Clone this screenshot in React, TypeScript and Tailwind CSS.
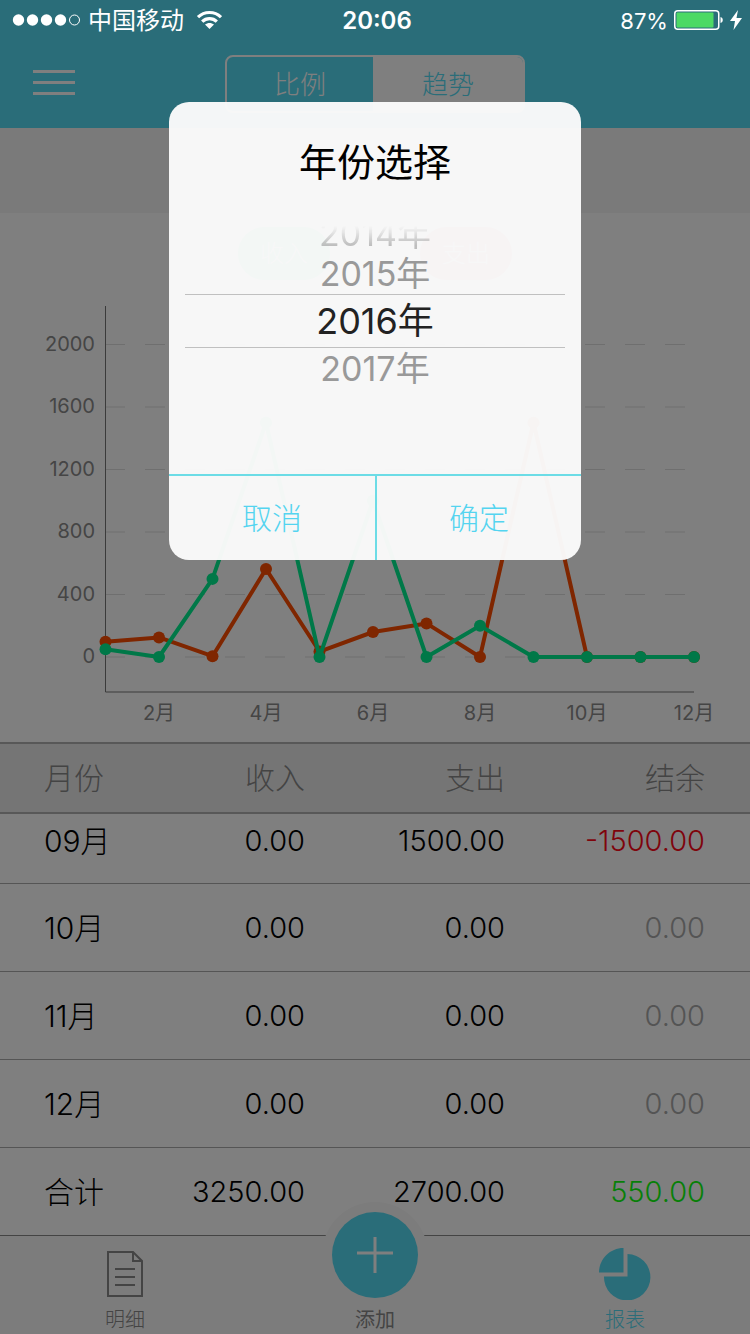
import React, { useState } from 'react';

interface MonthRow {
  month: string;
  income: string;
  expense: string;
  balance: string;
}

const YEARS = [2014, 2015, 2016, 2017];

const INCOME = [50, 0, 500, 1500, 0, 1000, 0, 200, 0, 0, 0, 0];
const EXPENSE = [97, 125, 5, 563, 35, 160, 215, 0, 1500, 0, 0, 0];

const ROWS: MonthRow[] = [
  { month: '09月', income: '0.00', expense: '1500.00', balance: '-1500.00' },
  { month: '10月', income: '0.00', expense: '0.00', balance: '0.00' },
  { month: '11月', income: '0.00', expense: '0.00', balance: '0.00' },
  { month: '12月', income: '0.00', expense: '0.00', balance: '0.00' },
  { month: '合计', income: '3250.00', expense: '2700.00', balance: '550.00' },
];

const balanceColor = (value: string) => {
  const n = parseFloat(value);
  if (n < 0) return 'text-[#ff0818]';
  if (n > 0) return 'text-[#10ff10]';
  return 'text-[#a8a8a8]';
};

const StatusBar: React.FC = () => (
  <div className="relative z-20 grid grid-cols-3 items-center h-10 pl-3 pr-2 text-white text-2xl leading-8">
    <div className="flex items-center gap-2">
      <svg width="68" height="14" viewBox="0 0 68 14" fill="#fff">
        <circle cx="6.500" cy="7" r="5.700" />
        <circle cx="20.500" cy="7" r="5.700" />
        <circle cx="34.500" cy="7" r="5.700" />
        <circle cx="48.500" cy="7" r="5.700" />
        <circle cx="62.500" cy="7" r="5" fill="none" stroke="#fff" />
      </svg>
      <span className="pt-[2px] pr-1">中国移动</span>
      <svg width="26" height="20" viewBox="0 0 26 20" fill="none" stroke="#fff" strokeWidth="3.200">
        <path d="M2 7.200C8.200 .9 18.800 .9 25 7.200" />
        <path d="M6.200 11.600C10.200 7.600 16.800 7.600 20.800 11.600" />
        <path d="M9 14.600C11.500 12.300 15.500 12.300 18 14.600L13.500 19Z" fill="#fff" stroke="none" />
      </svg>
    </div>
    <span className="pt-[2px] text-center font-semibold">20:06</span>
    <div className="flex items-center justify-end gap-[6px]">
      <span className="pt-[2px] text-[22px]">87%</span>
      <svg width="50" height="20" viewBox="0 0 50 20" fill="none">
        <rect x=".75" y=".75" width="44" height="18.500" rx="3" stroke="#fff" strokeWidth="1.500" />
        <rect x="2.500" y="2.500" width="37" height="15" rx="1" fill="#4cd964" />
        <path d="M46.500 7c3 .5 3 5.500 0 6Z" fill="#fff" />
      </svg>
      <svg width="12" height="20" viewBox="0 0 12 20" fill="#fff">
        <path d="M8 0 0 11h5L3.500 20 12 8H6.500Z" />
      </svg>
    </div>
  </div>
);

const px = (i: number) => 105.5 + i * 53.5;
const py = (v: number) => 357 - v * 0.15625;

const Series: React.FC<{ values: number[]; color: string }> = ({ values, color }) => (
  <g fill={color}>
    <polyline
      points={values.map((v, i) => `${px(i)},${py(v)}`).join(' ')}
      fill="none"
      stroke={color}
      strokeWidth="4"
      strokeLinejoin="round"
    />
    {values.map((v, i) => (
      <circle key={i} cx={px(i)} cy={py(v)} r="6" />
    ))}
  </g>
);

const TrendChart: React.FC = () => (
  <svg viewBox="0 0 750 442" className="block w-full" role="img" aria-label="收支趋势">
    {[0, 400, 800, 1200, 1600, 2000].map((v) => (
      <g key={v}>
        <line x1="105" x2="694" y1={py(v)} y2={py(v)} stroke="#dedede" strokeDasharray="20 20" />
        <text x="95" y={py(v) + 6} textAnchor="end" fontSize="20" fill="#8a8a8a">
          {v}
        </text>
      </g>
    ))}
    <path d="M105.500 6V392H694" fill="none" stroke="#777777" strokeWidth="1" />
    {[2, 4, 6, 8, 10, 12].map((m) => (
      <text key={m} x={px(m - 1)} y="420" textAnchor="middle" fontSize="20" fill="#8a8a8a">
        {m}月
      </text>
    ))}
    <Series values={EXPENSE} color="#ff4c00" />
    <Series values={INCOME} color="#00f090" />
  </svg>
);

const MonthTable: React.FC = () => (
  <table className="w-full table-fixed border-separate border-spacing-0 text-right text-[30px] leading-10 font-light">
    <colgroup>
      <col className="w-[105px]" />
      <col />
      <col />
      <col className="w-[245px]" />
    </colgroup>
    <thead>
      <tr className="bg-[#ebebeb] text-[#888888] [&>th]:h-[72px] [&>th]:border-y-2 [&>th]:border-[#b0b0b0] [&>th]:font-light">
        <th className="pl-11 text-left whitespace-nowrap">月份</th>
        <th>收入</th>
        <th>支出</th>
        <th className="pr-[45px]">结余</th>
      </tr>
    </thead>
    <tbody className="[&_td]:border-b [&_td]:border-[#aaaaaa] [&_td]:h-[88px] [&>tr:first-child>td]:h-[70px] [&>tr:first-child>td]:pb-4 [&>tr:last-child>td]:border-b-0">
      {ROWS.map((row) => (
        <tr key={row.month} className="text-[29px]">
          <td className="pl-11 text-left whitespace-nowrap text-[30px]">{row.month}</td>
          <td>{row.income}</td>
          <td>{row.expense}</td>
          <td className={`pr-[45px] ${balanceColor(row.balance)}`}>{row.balance}</td>
        </tr>
      ))}
    </tbody>
  </table>
);

const TabBar: React.FC = () => (
  <nav className="grid grid-cols-3 grid-rows-1 h-[99px] -mt-px bg-[#f8f8f8] border-t border-[#888888] text-xl leading-5 font-light text-[#888888]">
    <a href="#detail" className="flex flex-col items-center justify-end gap-[10px] pb-1">
      <svg width="38" height="52" viewBox="0 0 38 52" fill="none" stroke="#888888" strokeWidth="2">
        <path d="M2 4H27L36 13V48H2Z" />
        <path d="M27 4V13H36" />
        <path d="M9 21H29M9 29H29M9 37H29" />
      </svg>
      <span>明细</span>
    </a>
    <button type="button" className="flex flex-col items-center justify-end gap-3 pb-1">
      <span className="flex shrink-0 items-center justify-center size-[86px] rounded-full bg-[#54daf2] ring-[10px] ring-[#f8f8f8]">
        <svg width="36" height="36" viewBox="0 0 36 36" stroke="#fff" strokeWidth="3">
          <path d="M0 16H36M18 0V36" />
        </svg>
      </span>
      <span className="font-normal">添加</span>
    </button>
    <a href="#report" className="flex flex-col items-center justify-end gap-[10px] pb-1 text-[#54daf2]">
      <svg width="52" height="52" viewBox="0 0 52 52" fill="#54daf2">
        <path d="M24.500 0V24.500H0C0 11 11 0 24.500 0Z" />
        <path d="M28.500 6A23.200 23.200 0 1 1 5 28.500H28.500Z" />
      </svg>
      <span>报表</span>
    </a>
  </nav>
);

const YearDialog: React.FC = () => {
  const [year, setYear] = useState(2016);

  // rows get shorter and fade away from the selected one, like a wheel
  const rowStyle = (y: number) => {
    if (y === year) return 'h-[54px] border-y border-[#c0c0c0] items-center text-[36px] leading-10 text-[#222222]';
    if (y < year - 1) return 'h-6 items-start text-[34px] leading-4 text-[#999999] opacity-60 mask-t-from-20% mask-t-to-100%';
    if (y < year) return 'h-11 items-end text-[34px] leading-10 text-[#999999]';
    return 'h-[42px] items-center text-[34px] leading-10 text-[#999999]';
  };

  return (
    <div role="dialog" aria-label="年份选择" className="w-[412px] overflow-hidden rounded-[20px] bg-[#fbfbfb]/97">
      <h2 className="flex items-center justify-center h-[124px] pb-1 text-[38px] leading-[48px] text-black">年份选择</h2>
      <div role="listbox" aria-label="年份" className="flex flex-col h-[248px] px-4 overflow-hidden">
        {YEARS.map((y) => (
          <button
            key={y}
            type="button"
            role="option"
            aria-selected={y === year}
            onClick={() => setYear(y)}
            className={`flex shrink-0 justify-center overflow-hidden ${rowStyle(y)}`}
          >
            {y}年
          </button>
        ))}
      </div>
      <div className="grid grid-cols-2 h-[86px] border-t-2 border-[#6cdce6] text-[30px] font-light text-[#54d4f0]">
        <button type="button">取消</button>
        <button type="button" className="border-l-2 border-[#6cdce6]">确定</button>
      </div>
    </div>
  );
};

const App: React.FC = () => {
  return (
    <div className="relative min-h-screen overflow-hidden bg-white font-['Inter','Noto_Sans_CJK_SC',sans-serif] text-black">
      <header className="bg-[#54daf2]">
        <StatusBar />
        <div className="grid grid-cols-[1fr_300px_1fr] h-[88px] pt-[15px] items-start">
          <button type="button" aria-label="菜单" className="pl-[33px] pt-[14px]">
            <svg width="42" height="28" viewBox="0 0 42 28" stroke="#fff" strokeWidth="3">
              <path d="M0 2.500H42M0 13.500H42M0 24.500H42" />
            </svg>
          </button>
          <div className="grid grid-cols-[146px_1fr] h-[58px] overflow-hidden rounded-lg border-2 border-white text-[26px] font-light">
            <button type="button" className="text-white">比例</button>
            <button type="button" className="bg-white text-[#54daf2]">趋势</button>
          </div>
        </div>
      </header>

      <div className="h-[85px] bg-[#f5f5f5]" />

      <main>
        <div className="flex justify-center gap-[90px] pt-[14px] pb-5 text-2xl font-light text-white">
          <button type="button" className="w-[92px] h-[53px] rounded-full bg-[#00f090]">收入</button>
          <button type="button" className="w-[92px] h-[53px] rounded-full bg-[#ff5064]">支出</button>
        </div>
        <TrendChart />
        <MonthTable />
      </main>

      <TabBar />

      <div className="absolute inset-0 z-10 flex items-start justify-center bg-black/50 pt-[102px]">
        <YearDialog />
      </div>
    </div>
  );
};

export default App;
